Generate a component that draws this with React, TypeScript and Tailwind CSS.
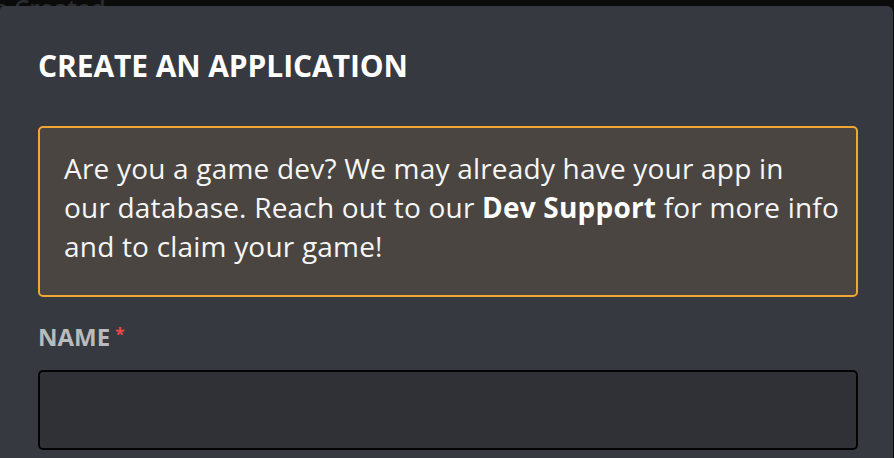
import React from 'react';

const font = { fontFamily: '"Open Sans", "Noto Sans", sans-serif' };

export default function App() {
  return (
    <div className="w-[894px] h-[458px] overflow-hidden bg-[#0b0b0c]" style={font}>
      {/* strip of the page behind the modal */}
      <div className="h-[6px] overflow-hidden flex items-end">
        <span className="text-[24px] leading-[24px] text-[#2b2c2f] font-semibold whitespace-nowrap translate-y-[14px] -ml-[6px]">
          e Created
        </span>
      </div>

      <div className="w-[893px] h-[452px] bg-[#36393f] rounded-tr-[6px] rounded-tl-[4px] px-[38px] pt-[40px]">
        <h2 className="text-[30px] leading-[40px] font-bold text-white tracking-[-0.1px]">
          CREATE AN APPLICATION
        </h2>

        <div className="mt-[40px] w-[820px] h-[171px] border-2 border-[#f0a732] bg-[#4a4540] rounded-[5px] px-[24px] pt-[21px]">
          <p className="text-[28px] leading-[39px] text-[#f6f6f6] tracking-[0.2px] whitespace-nowrap">
            Are you a game dev? We may already have your app in
            <br />
            our database. Reach out to our <span className="font-bold text-white">Dev Support</span> for more info
            <br />
            and to claim your game!
          </p>
        </div>

        <div className="mt-[24px] flex items-start">
          <span className="text-[24px] leading-[32px] font-bold text-[#b9bbbe]">NAME</span>
          <span className="ml-[5px] mt-[4px] text-[17px] leading-[20px] font-bold text-[#f04747]">*</span>
        </div>

        <div className="mt-[17px] w-[820px] h-[80px] border-2 border-[#040405] bg-[#303136] rounded-[5px]" />
      </div>
    </div>
  );
}
